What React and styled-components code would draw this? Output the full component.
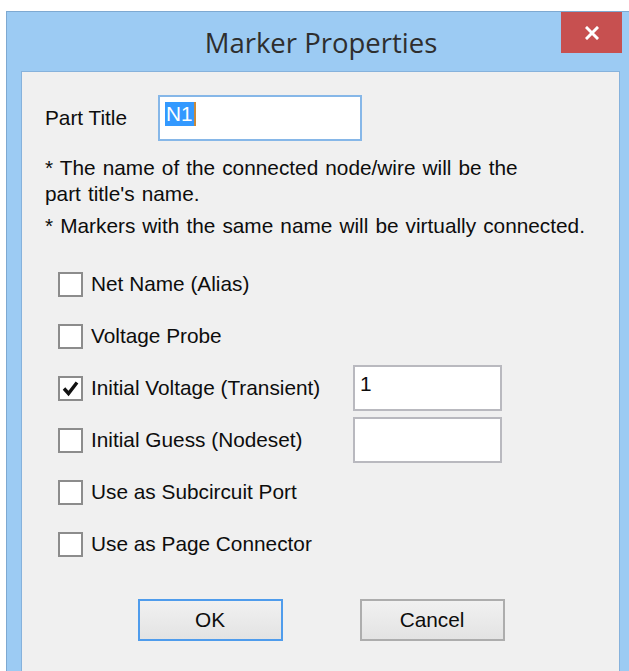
import React from "react";
import styled, { createGlobalStyle } from "styled-components";

const GlobalStyle = createGlobalStyle`
  html, body {
    margin: 0;
    padding: 0;
    background: #fff;
    overflow: hidden;
  }
`;

const options = [
    { label: "Net Name (Alias)", checked: false },
    { label: "Voltage Probe", checked: false },
    { label: "Initial Voltage (Transient)", checked: true, value: "1" },
    { label: "Initial Guess (Nodeset)", checked: false, value: "" },
    { label: "Use as Subcircuit Port", checked: false },
    { label: "Use as Page Connector", checked: false },
];

const CheckMark = () => (
    <svg width="19" height="19" viewBox="0 0 19 19">
        <path d="M3 9.5 L7.5 14.5 L16 3.5" fill="none" stroke="#111" strokeWidth="3.4" strokeLinejoin="miter" />
    </svg>
);

const CloseGlyph = () => (
    <svg width="14" height="14" viewBox="0 0 14 14">
        <path d="M2 2 L12 12 M12 2 L2 12" stroke="#fff" strokeWidth="3" strokeLinecap="square" />
    </svg>
);

const App = () => {
    return (
        <>
            <GlobalStyle />
            <StWindow>
                <StTitleBar>
                    <span />
                    <StTitle>Marker Properties</StTitle>
                    <StClose>
                        <CloseGlyph />
                    </StClose>
                </StTitleBar>

                <StClient>
                    <StTitleRow>
                        <StLabel>Part Title</StLabel>
                        <StEdit $focused>
                            <StSelected>N1</StSelected>
                        </StEdit>
                    </StTitleRow>

                    <StNotes>
                        <p>* The name of the connected node/wire will be the<br />part title's name.</p>
                        <p>* Markers with the same name will be virtually connected.</p>
                    </StNotes>

                    <StOptions>
                        {options.map((opt) => (
                            <StOptionRow key={opt.label}>
                                <StCheck>
                                    <StBox>{opt.checked && <CheckMark />}</StBox>
                                    <span>{opt.label}</span>
                                </StCheck>
                                {opt.value !== undefined && <StEdit $small>{opt.value}</StEdit>}
                            </StOptionRow>
                        ))}
                    </StOptions>

                    <StButtons>
                        <StButton $default>OK</StButton>
                        <StButton>Cancel</StButton>
                    </StButtons>
                </StClient>
            </StWindow>
        </>
    );
};

export default App;

const StWindow = styled.div`
  margin: 11px 0 0 6px;
  width: 623px;
  height: 670px;
  box-sizing: border-box;
  background: #9ccbf3;
  border-top: 1px solid #7ea9d1;
  border-left: 1px solid #7ea9d1;
  display: flex;
  flex-direction: column;
  padding: 0 9px 7px 14px;
`;

const StTitleBar = styled.div`
  height: 59px;
  display: grid;
  grid-template-columns: 1fr auto 1fr;
  align-items: start;
  margin-right: -9px;
`;

const StTitle = styled.div`
  font-family: "Open Sans", "Noto Sans", sans-serif;
  font-size: 27.5px;
  color: #2e2e2e;
  line-height: 38px;
  padding-top: 12px;
  padding-right: 8px;
`;

const StClose = styled.div`
  justify-self: end;
  width: 61px;
  height: 41px;
  margin-right: 7px;
  background: #c75050;
  display: flex;
  align-items: center;
  justify-content: center;
`;

const StClient = styled.div`
  flex: 1;
  background: #f0f0f0;
  border: 1px solid #86b2dc;
  padding: 23px 0 0 23px;
  font-family: "Liberation Sans", Arial, sans-serif;
  font-size: 20.8px;
  color: #0d0d0d;
  display: flex;
  flex-direction: column;
`;

const StTitleRow = styled.div`
  display: flex;
  align-items: center;
`;

const StLabel = styled.span`
  width: 113px;
`;

const StEdit = styled.div`
  box-sizing: border-box;
  width: ${(p) => (p.$small ? "149px" : "204px")};
  height: 46px;
  background: #fff;
  border: 2px solid ${(p) => (p.$focused ? "#86b7e8" : "#b9b9bf")};
  padding: 4px 5px;
  line-height: 26px;
`;

const StSelected = styled.span`
  display: inline-block;
  background: #3399ff;
  color: #fff;
  line-height: 24px;
  padding: 0 1px;
  border-right: 2px solid #c98a3a;
`;

const StNotes = styled.div`
  margin-top: 14px;
  line-height: 26px;
  word-spacing: 1.3px;

  p {
    margin: 0 0 6px;
  }
`;

const StOptions = styled.div`
  margin-top: 13px;
  padding-left: 13px;
  display: flex;
  flex-direction: column;
`;

const StOptionRow = styled.div`
  height: 52px;
  display: grid;
  grid-template-columns: 295px auto;
  align-items: center;
`;

const StCheck = styled.label`
  display: flex;
  align-items: center;
  gap: 8px;
`;

const StBox = styled.span`
  box-sizing: border-box;
  width: 25px;
  height: 25px;
  background: #fff;
  border: 2px solid #8c8c8c;
  display: flex;
  align-items: center;
  justify-content: center;
`;

const StButtons = styled.div`
  margin-top: 29px;
  display: flex;
  justify-content: center;
  gap: 77px;
  padding-right: 22px;
`;

const StButton = styled.div`
  box-sizing: border-box;
  width: 145px;
  height: 42px;
  border: 2px solid ${(p) => (p.$default ? "#4f9cec" : "#adadad")};
  background: linear-gradient(#f1f1f1, #e3e3e3);
  display: flex;
  align-items: center;
  justify-content: center;
`;
